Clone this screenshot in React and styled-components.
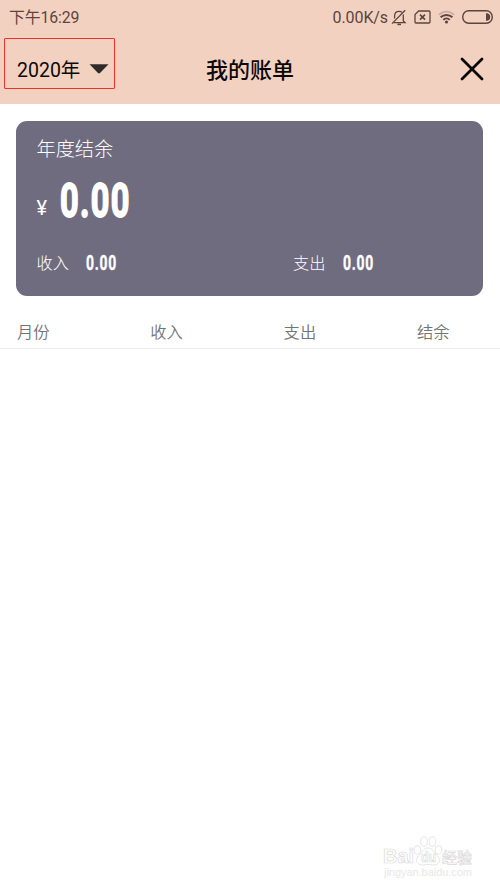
import React from 'react'
import styled, { createGlobalStyle } from 'styled-components'

const GlobalStyle = createGlobalStyle`
  * {
    box-sizing: border-box;
  }

  body {
    margin: 0;
    background: #fff;
    font-family: Roboto, 'Noto Sans CJK SC', sans-serif;
  }
`

const Screen = styled.div`
  position: relative;
  width: 500px;
  height: 889px;
  overflow: hidden;
  background: #fff;
`

const Top = styled.header`
  height: 104px;
  background: #f3d1c1;
`

const StatusBar = styled.div`
  display: flex;
  align-items: center;
  justify-content: space-between;
  height: 34px;
  padding: 0 7px 0 9px;
  color: #5b453d;
  font-size: 16px;
  line-height: 34px;
`

const Clock = styled.span`
  padding-top: 2px;
  font-size: 15.8px;
  letter-spacing: -0.1px;
`

const StatusIcons = styled.div`
  display: flex;
  align-items: center;
  height: 34px;
`

const Speed = styled.span`
  padding-top: 2px;
  margin-right: 3px;
  letter-spacing: -0.1px;
`

const StatusIcon = styled.svg`
  display: block;
  margin-right: ${props => props.$gap || 0}px;
`

const NavBar = styled.div`
  display: grid;
  grid-template-columns: 1fr auto 1fr;
  align-items: center;
  height: 70px;
  padding: 0 16px;
  color: #0c0908;
`

const YearPicker = styled.div`
  position: relative;
  display: flex;
  align-items: center;
  font-size: 19.5px;
  line-height: 28px;
`

const Year = styled.span`
  padding: 3px 0 0 1px;
`

const Arrow = styled.svg`
  margin: -1px 0 0 9px;
`

const Highlight = styled.div`
  position: absolute;
  top: -16px;
  left: -12px;
  width: 111px;
  height: 51px;
  border: 1.5px solid #f0312b;
  border-radius: 1px;
`

const Title = styled.h1`
  margin: 0;
  padding-top: 4px;
  font-size: 22px;
  font-weight: 500;
  line-height: 32px;
`

const CloseButton = styled.button`
  display: flex;
  justify-self: end;
  padding: 0;
  border: 0;
  background: none;
  color: inherit;
`

const Card = styled.section`
  width: 467px;
  height: 175px;
  margin: 17px 0 0 16px;
  padding: 15px 20.5px 0;
  border-radius: 11px;
  background: #706c80;
  color: #fff;
`

const CardLabel = styled.div`
  font-size: 19.2px;
  font-weight: 300;
  line-height: 28px;
`

const Balance = styled.div`
  display: flex;
  align-items: flex-start;
  height: 60px;
  margin-top: 7px;
  line-height: 60px;
`

const Currency = styled.span`
  width: 23px;
  font-size: 20px;
  line-height: 75px;
`

const Digits = styled.span`
  display: inline-block;
  font-size: ${props => props.$size}px;
  font-weight: 700;
  letter-spacing: ${props => props.$spacing || 0}px;
  transform: scaleX(${props => props.$squeeze});
  transform-origin: left center;
  -webkit-text-stroke: ${props => props.$stroke}px currentColor;
`

const Totals = styled.div`
  display: grid;
  grid-template-columns: 256.5px 1fr;
  margin-top: 18px;
`

const Total = styled.div`
  display: flex;
  align-items: center;
  height: 28px;
  font-size: 16.2px;
  font-weight: 300;
  line-height: 28px;
`

const TotalName = styled.span`
  width: 49.5px;
  padding-top: 1px;
`

const TableHead = styled.div`
  display: grid;
  grid-template-columns: repeat(4, 133.3px);
  height: 53px;
  padding: 21px 0 0 17px;
  border-bottom: 1px solid #ececec;
  color: #747474;
  font-size: 16.3px;
  font-weight: 350;
  line-height: 32px;
`

const Watermark = styled.svg`
  position: absolute;
  right: 20px;
  bottom: 4px;
`

const totals = [
  { name: '收入', value: '0.00' },
  { name: '支出', value: '0.00' }
]

const columns = ['月份', '收入', '支出', '结余']

const MutedBell = () => (
  <StatusIcon width="16" height="17" viewBox="0 0 16 17" fill="none" stroke="currentColor" strokeWidth="1.3" $gap={7}>
    <path d="M3.6 9.5V7C3.6 4 5.200 2.300 8 2.300c1.400 0 2.400 0.400 3.100 1.100M12.300 5.500v6.500l1.700 1.600H2.600" />
    <path d="M1 14.600 14.200 1.200" />
    <path d="M6.400 15.400h3.600" strokeWidth="1.600" />
  </StatusIcon>
)

const NoSim = () => (
  <StatusIcon width="17" height="14" viewBox="0 0 17 14" fill="none" stroke="currentColor" strokeWidth="1.3" $gap={7}>
    <path d="M4.7 1H15q1 0 1 1v10q0 1-1 1H2q-1 0-1-1V4.5z" />
    <path d="m6 4.600 5 5m0-5L6 9.600" strokeWidth="1.6" />
  </StatusIcon>
)

const Wifi = () => (
  <StatusIcon width="17" height="14" viewBox="0 0 17 14" fill="none" stroke="currentColor" strokeWidth="1.9" $gap={7}>
    <path d="M1 4.8C5.2 0.5 11.8 0.5 16 4.8" opacity="0.25" />
    <path d="M2.600 7.3c3.300-3.100 8.500-3.100 11.800 0" />
    <path d="M5.3 9.9c1.800-1.800 4.600-1.800 6.400 0" />
    <circle cx="8.5" cy="12" r="1.6" fill="currentColor" stroke="none" />
  </StatusIcon>
)

const Battery = () => (
  <StatusIcon width="31" height="14" viewBox="0 0 31 14" fill="none">
    <rect x="0.8" y="0.8" width="29.4" height="12.4" rx="5.8" stroke="currentColor" strokeWidth="1.4" />
    <path d="M24 3.2h1.2q3 0.6 3 3.8t-3 3.8H24z" fill="currentColor" />
  </StatusIcon>
)

const BaiduMark = () => (
  <Watermark width="100" height="52" viewBox="0 0 100 52">
    <g fill="#fff" stroke="#dadada" strokeWidth="0.7" fontFamily="'Liberation Sans', sans-serif" fontWeight="700">
      <text x="3" y="30" fontSize="20" textLength="31" lengthAdjust="spacingAndGlyphs">Bai</text>
      <ellipse cx="37.500" cy="17" rx="3.300" ry="4.300" />
      <ellipse cx="44" cy="8.500" rx="3.300" ry="4.800" />
      <ellipse cx="52.500" cy="8.500" rx="3.300" ry="4.800" />
      <ellipse cx="58.500" cy="17" rx="3.300" ry="4.300" />
      <path d="M48 15c-5 0-5 4-8.500 7c-3 2.500-4 6-1.500 8.500c3 2.500 6 1 10 1s7 1.500 10-1c2.500-2.500 1.500-6-1.500-8.500c-3.500-3-3.500-7-8.500-7z" />
      <text x="41" y="29" fontSize="14" textLength="15" lengthAdjust="spacingAndGlyphs">du</text>
      <text x="62" y="30" fontSize="15" textLength="30" fontWeight="500" fontFamily="'Noto Sans CJK SC', sans-serif">经验</text>
    </g>
    <text x="4" y="43" fontSize="11" textLength="88" fill="#e8e8e8" fontFamily="'Liberation Sans', sans-serif">
      jingyan.baidu.com
    </text>
  </Watermark>
)

const App = () => {
  return (
    <>
      <GlobalStyle />
      <Screen>
        <Top>
          <StatusBar>
            <Clock>下午16:29</Clock>
            <StatusIcons>
              <Speed>0.00K/s</Speed>
              <MutedBell />
              <NoSim />
              <Wifi />
              <Battery />
            </StatusIcons>
          </StatusBar>
          <NavBar>
            <YearPicker>
              <Year>2020年</Year>
              <Arrow width="20" height="10" viewBox="0 0 20 10">
                <path d="M0.500 0.300h19L11 9q-1 0.800-2 0z" fill="#302b29" />
              </Arrow>
              <Highlight />
            </YearPicker>
            <Title>我的账单</Title>
            <CloseButton aria-label="关闭">
              <svg width="24" height="24" viewBox="0 0 24 24" stroke="currentColor" strokeWidth="2.800" strokeLinecap="round">
                <path d="m2 2 20 20M22 2 2 22" />
              </svg>
            </CloseButton>
          </NavBar>
        </Top>
        <Card>
          <CardLabel>年度结余</CardLabel>
          <Balance>
            <Currency>¥</Currency>
            <Digits $size={48.5} $squeeze={0.67} $stroke={1.8} $spacing={2}>0.00</Digits>
          </Balance>
          <Totals>
            {totals.map(item => (
              <Total key={item.name}>
                <TotalName>{item.name}</TotalName>
                <Digits $size={20.5} $squeeze={0.68} $stroke={0.4} $spacing={1.1}>{item.value}</Digits>
              </Total>
            ))}
          </Totals>
        </Card>
        <TableHead>
          {columns.map(name => (
            <span key={name}>{name}</span>
          ))}
        </TableHead>
        <BaiduMark />
      </Screen>
    </>
  )
}

export default App
